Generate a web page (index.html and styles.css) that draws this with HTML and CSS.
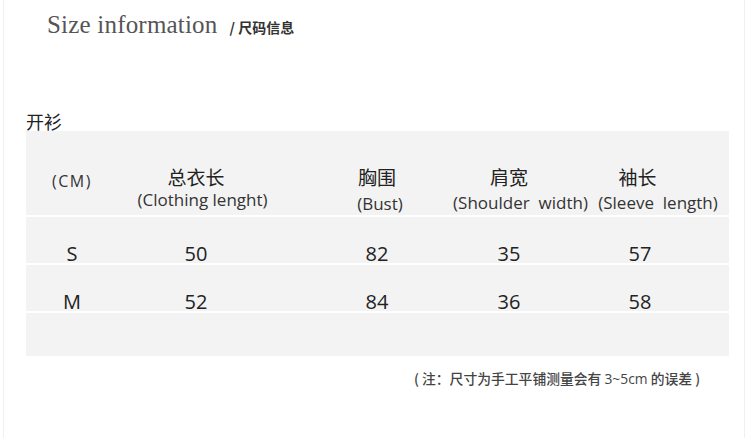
FILE: index.html
```html
<!DOCTYPE html>
<html lang="zh-CN">
<head>
<meta charset="utf-8">
<title>Size information</title>
<link rel="stylesheet" href="styles.css">
</head>
<body>
<div class="page">
  <header class="title">
    <span class="title-en">Size information</span>
    <span class="title-cn">/ 尺码信息</span>
  </header>
  <h2 class="cat">开衫</h2>
  <div class="table">
    <div class="row head">
      <div class="cell c1"><span class="unit">(CM)</span></div>
      <div class="cell c2"><span class="cn">总衣长</span><span class="en en-cloth">(Clothing lenght)</span></div>
      <div class="cell c3"><span class="cn">胸围</span><span class="en en-bust">(Bust)</span></div>
      <div class="cell c4"><span class="cn">肩宽</span><span class="en en-shoulder">(Shoulder  width)</span></div>
      <div class="cell c5"><span class="cn cn-sleeve">袖长</span><span class="en en-sleeve">(Sleeve  length)</span></div>
    </div>
    <div class="row data">
      <div class="cell c1">S</div>
      <div class="cell c2">50</div>
      <div class="cell c3">82</div>
      <div class="cell c4">35</div>
      <div class="cell c5">57</div>
    </div>
    <div class="row data">
      <div class="cell c1">M</div>
      <div class="cell c2">52</div>
      <div class="cell c3">84</div>
      <div class="cell c4">36</div>
      <div class="cell c5">58</div>
    </div>
    <div class="row empty"></div>
  </div>
  <p class="note">( 注：尺寸为手工平铺测量会有 <span class="note-num">3~5cm</span> 的误差 )</p>
</div>
</body>
</html>
```
FILE: styles.css
```css
html, body {
  margin: 0;
  padding: 0;
  background: #ffffff;
}

.page {
  width: 742px;
  height: 438px;
  margin-left: 3px;
  border-left: 1px solid #f0f0f0;
  border-right: 1px solid #f0f0f0;
  box-sizing: border-box;
  font-family: "Open Sans", "Noto Sans CJK SC", sans-serif;
  color: #222;
}

.title {
  display: flex;
  align-items: baseline;
  padding: 11px 0 0 43px;
  height: 28px;
  gap: 12px;
}

.title-en {
  font-family: "Liberation Serif", serif;
  font-size: 25px;
  letter-spacing: 0.2px;
  color: #555;
}

.title-cn {
  font-family: "Noto Sans CJK SC", sans-serif;
  font-size: 14px;
  font-weight: 700;
  color: #333;
}

.cat {
  margin: 73px 0 0 22px;
  font-family: "Noto Sans CJK SC", sans-serif;
  font-size: 18px;
  font-weight: 400;
  line-height: 19px;
  color: #222;
}

.table {
  margin: 0 0 0 22px;
  width: 703px;
  display: flex;
  flex-direction: column;
  gap: 2px;
}

.row {
  display: grid;
  grid-template-columns: 92px 156px 164px 142px 149px;
  background: #f3f3f3;
}

.head {
  height: 84px;
}

.data {
  height: 46px;
}

.empty {
  height: 43px;
}

.cell {
  text-align: center;
  white-space: pre;
}

.c3 {
  padding-left: 42px;
}

.c5 {
  padding-right: 29px;
}

.head .cell {
  display: flex;
  flex-direction: column;
  align-items: center;
  padding-top: 34px;
}

.cn {
  display: block;
  font-family: "Noto Sans CJK SC", sans-serif;
  font-size: 19px;
  line-height: 24px;
  color: #222;
}

.en {
  display: block;
  font-size: 17px;
  line-height: 22px;
  color: #333;
}

.unit {
  display: block;
  font-size: 16px;
  line-height: 22px;
  letter-spacing: 1.5px;
  padding-top: 5px;
  color: #333;
}

.en-cloth {
  margin-left: 13px;
  margin-top: 0;
}

.en-bust {
  margin-left: 6px;
  margin-top: 4px;
}

.en-shoulder {
  margin-left: 23px;
  margin-top: 3px;
}

.cn-sleeve {
  margin-right: 5px;
}

.en-sleeve {
  margin-left: 36px;
  margin-top: 3px;
}

.data .cell {
  font-size: 20px;
  line-height: 20px;
  padding-top: 27px;
  color: #222;
}

.note {
  margin: 14px 0 0 410px;
  font-family: "Noto Sans CJK SC", sans-serif;
  font-size: 13.8px;
  font-weight: 500;
  line-height: 16px;
  color: #444;
  white-space: pre;
}

.note-num {
  font-family: "Open Sans", sans-serif;
  font-weight: 400;
}
```
